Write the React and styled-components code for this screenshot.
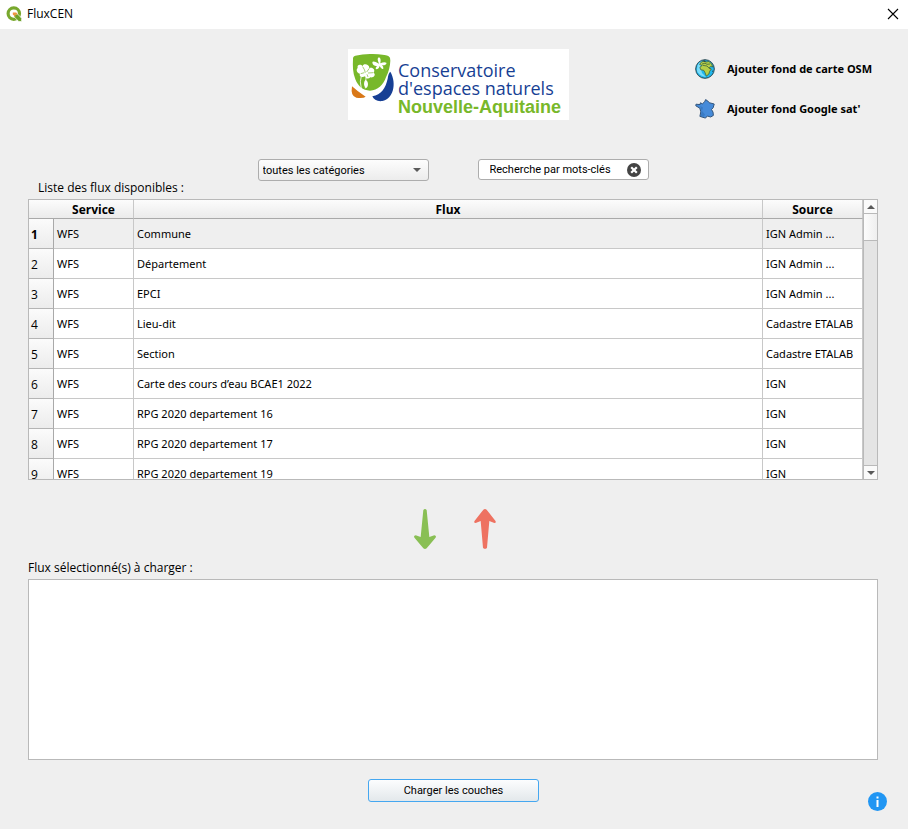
import React, { useState } from 'react';
import styled, { createGlobalStyle } from 'styled-components';

const GlobalStyle = createGlobalStyle`
  *, *::before, *::after { box-sizing: border-box; }
  body {
    margin: 0;
    background: #efefef;
    color: #000;
    font: 12px/16px "Open Sans", "Noto Sans", sans-serif;
  }
  button, input, select { font: inherit; color: inherit; }
  svg { flex: none; }
`;

const Dialog = styled.div`
  display: flex;
  flex-direction: column;
  min-height: 100vh;
`;

const TitleBar = styled.header`
  display: flex;
  align-items: center;
  height: 29px;
  padding: 0 8px 2px 6px;
  gap: 5px;
  background: #fff;
`;

const WindowTitle = styled.h1`
  flex: 1;
  margin: 0;
  font-size: 12px;
  font-weight: 400;
`;

const IconButton = styled.button`
  display: flex;
  padding: 0;
  border: 0;
  background: none;
  cursor: pointer;
`;

const Content = styled.main`
  display: flex;
  flex: 1;
  flex-direction: column;
  padding: 20px 30px 19px 28px;
`;

const Hero = styled.section`
  display: grid;
  grid-template-columns: 1fr 221px 1fr;
  padding-left: 11px;
`;

const Logo = styled.div`
  grid-column: 2;
  display: flex;
  height: 71px;
  background: #fff;
`;

const LogoText = styled.div`
  display: flex;
  flex-direction: column;
  padding-top: 12px;
  color: #173f94;
  font: 18px/18px "Open Sans", sans-serif;
  white-space: nowrap;
`;

const Region = styled.strong`
  color: #78b82a;
  font: bold 18px/20px "Liberation Sans", sans-serif;
`;

const MapActions = styled.div`
  display: flex;
  flex-direction: column;
  justify-self: end;
  width: 183px;
  gap: 20px;
  padding-top: 10px;
`;

const MapAction = styled.button`
  display: flex;
  align-items: center;
  height: 20px;
  gap: 12px;
  padding: 0;
  border: 0;
  background: none;
  font-family: "Noto Sans", sans-serif;
  font-size: 11px;
  font-weight: 700;
  white-space: nowrap;
  cursor: pointer;
`;

const Filters = styled.div`
  display: flex;
  justify-content: center;
  gap: 49px;
  margin-top: 39px;
`;

const controlFont = '11px/16px Roboto, sans-serif';

const field = `
  width: 171px;
  height: 22px;
  border: 1px solid #adadad;
  border-radius: 3px;
  font: ${controlFont};
`;

const SelectBox = styled.div`
  ${field}
  display: grid;
  grid-template-columns: 1fr 15px;
  align-items: center;
  background: linear-gradient(#fdfdfd, #ececec);
`;

const CategorySelect = styled.select`
  grid-area: 1 / 1 / 2 / 3;
  width: 100%;
  height: 20px;
  padding: 2px 16px 0 4px;
  border: 0;
  background: none;
  appearance: none;
`;

const SelectArrow = styled.svg`
  grid-area: 1 / 2;
  pointer-events: none;
`;

const SearchBox = styled.div`
  ${field}
  display: flex;
  align-items: center;
  height: 21px;
  padding: 0 7px 0 11px;
  background: #fff;
`;

const SearchInput = styled.input`
  flex: 1;
  min-width: 0;
  padding: 0;
  border: 0;
  outline: 0;
  background: none;
  &::placeholder { color: #000; opacity: 1; }
`;

const Caption = styled.h2`
  margin: 0 0 4px;
  padding-left: ${(p) => (p.$indent ? '10px' : '0')};
  font-size: 12px;
  font-weight: 400;
  line-height: 14px;
`;

const TableFrame = styled.div`
  display: flex;
  height: 281px;
  border: 1px solid #b9b9b9;
  background: #fff;
  overflow: hidden;
`;

const TableViewport = styled.div`
  flex: 1;
  min-width: 0;
  overflow: hidden;
`;

const FluxTable = styled.table`
  width: 100%;
  table-layout: fixed;
  border-collapse: separate;
  border-spacing: 0;
`;

const Col = styled.col`
  width: ${(p) => p.$width};
`;

const HeadCell = styled.th`
  height: 19px;
  padding: 2px 0 0;
  border-right: ${(p) => (p.$corner ? '0' : '1px solid #c8c8c8')};
  border-bottom: 1px solid #a9a9a9;
  background: linear-gradient(#fcfcfc, #ebebeb);
  line-height: 16px;
`;

const RowNumber = styled.th`
  height: 30px;
  padding: 2px 0 0 2px;
  border-right: 1px solid #a9a9a9;
  border-bottom: 1px solid #b4b4b4;
  background: linear-gradient(#fbfbfb, #ececec);
  font-weight: ${(p) => (p.$current ? 700 : 400)};
  text-align: left;
`;

const Cell = styled.td`
  height: 30px;
  padding: 0 3px;
  border-right: 1px solid #c8c8c8;
  border-bottom: 1px solid #c8c8c8;
  background: ${(p) => (p.$current ? '#efefef' : '#fff')};
  font-family: "Noto Sans", sans-serif;
  font-size: 11px;
  overflow: hidden;
  white-space: nowrap;
`;

const ScrollTrack = styled.div`
  display: flex;
  flex-direction: column;
  width: 14px;
  border-left: 1px solid #b9b9b9;
  background: #e4e4e4;
`;

const ScrollStep = styled.button`
  display: flex;
  align-items: center;
  justify-content: center;
  height: 14px;
  padding: 0;
  border: 0 solid #b9b9b9;
  border-width: ${(p) => (p.$down ? '1px 0 0' : '0 0 1px')};
  background: #fafafa;
`;

const ScrollThumb = styled.div`
  height: 27px;
  margin-bottom: auto;
  border-bottom: 1px solid #b9b9b9;
  background: linear-gradient(90deg, #fcfcfc, #efefef);
`;

const Transfer = styled.div`
  display: flex;
  justify-content: center;
  gap: 38px;
  padding: 29px 0 12px 4px;
`;

const Selected = styled.ul`
  flex: 1;
  min-height: 120px;
  margin: 0;
  padding: 0;
  border: 1px solid #b9b9b9;
  background: #fff;
  list-style: none;
`;

const Footer = styled.footer`
  display: grid;
  grid-template-columns: 1fr 171px 1fr;
  padding: 0 21px 18px 20px;
`;

const LoadButton = styled.button`
  grid-column: 2;
  height: 23px;
  padding: 0;
  border: 1px solid #45a7f0;
  border-radius: 3px;
  background: linear-gradient(#fcfdfe, #e3e8eb);
  font: ${controlFont};
  cursor: pointer;
`;

const InfoButton = styled(IconButton)`
  justify-self: end;
  margin-top: 13px;
`;

const rows = [
  ['WFS', 'Commune', 'IGN Admin ...'],
  ['WFS', 'Département', 'IGN Admin ...'],
  ['WFS', 'EPCI', 'IGN Admin ...'],
  ['WFS', 'Lieu-dit', 'Cadastre ETALAB'],
  ['WFS', 'Section', 'Cadastre ETALAB'],
  ['WFS', 'Carte des cours d’eau BCAE1 2022', 'IGN'],
  ['WFS', 'RPG 2020 departement 16', 'IGN'],
  ['WFS', 'RPG 2020 departement 17', 'IGN'],
  ['WFS', 'RPG 2020 departement 19', 'IGN'],
];

const QgisIcon = () => (
  <svg width="16" height="16" viewBox="0 0 16 16" aria-hidden="true">
    <circle cx="7.8" cy="7.6" r="5.7" fill="none" stroke="#78a82d" strokeWidth="3.2" />
    <path d="M8 8h3.6l4 4.2v3.3h-2.8L8 10.8z" fill="#6ea22a" stroke="#fff" strokeWidth=".7" />
    <path d="M6.8 6.5h3.4L12 8.4H9.4v2.5L6.8 8.5z" fill="#ef9440" />
  </svg>
);

const LogoMark = () => (
  <svg width="50" height="71" viewBox="24 27 150 213" aria-hidden="true">
    <path d="M39 58Q38 49 46 47Q70 41 98 42Q134 43 145 48Q152 52 151 62Q150 88 138 112C130 135 113 151 90 152C68 152 54 138 46 118C38 98 38 78 39 58Z" fill="#78b82a" />
    <path d="M36 139Q52 154 77 170Q70 176 49 173Q31 169 36 139Z" fill="#d97818" />
    <path d="M151 95C172 132 158 178 127 183C112 185 101 179 97 169C124 164 137 144 143 116Q145 100 151 95Z" fill="#173f94" />
    <path d="M53 84C50 74 62 71 68 79C69 69 88 72 88 84C98 80 107 89 101 98C109 104 101 114 91 112C86 118 77 117 75 109C67 114 56 109 60 101C51 100 47 89 53 84Z" fill="#fff" />
    <path d="M68 80Q75 90 76 98M88 85L80 96M100 98L84 99M62 101L73 98M81 103L84 111" fill="none" stroke="#78b82a" strokeWidth="2" />
    <path d="M64 108Q58 124 64 146M78 112L76 145" fill="none" stroke="#fff" strokeWidth="2.5" />
    <path d="M76 120C86 122 86 139 79 144C71 141 70 127 76 120Z" fill="#fff" />
    <path d="M117 71Q100 61 97 66Q97 77 111 79Q104 85 109 88Q116 88 119 78Q125 90 130 86Q131 80 126 76Q142 75 139 68Q133 64 121 70Q124 54 117 52Q109 54 117 71Z" fill="#fff" />
  </svg>
);

const GlobeIcon = () => (
  <svg width="20" height="20" viewBox="0 0 20 20" aria-hidden="true">
    <circle cx="10" cy="10" r="9.3" fill="#20b7ed" stroke="#26464f" />
    <path d="M2.2 8Q3 3.5 7 2.2L5.5 8 7 14 11 18Q4 17 2 12Z" fill="#79dcfa" />
    <path d="M6 3.2L9 2.1 11 3 14 2.5 16.6 5.1 17.7 8 15.8 7.4 14.2 8.6 16.3 10 14.6 12.4 13.9 15 11.3 17.1 10.1 13.8 8.8 11.4 5.7 10.7 4.9 8.3 7.3 6.3 4.7 5.7Z" fill="#b6cf48" stroke="#416638" strokeWidth=".8" />
    <path d="M7 5L10 4.2 12 5.3 15 5M8 6.4L12 7 15 10.1" fill="none" stroke="#416638" strokeWidth=".8" />
    <path d="M8 1.5h2l1 1-2 .5zM17 12.5l.8-1.5v2.4z" fill="#293f42" />
  </svg>
);

const FranceIcon = () => (
  <svg width="20" height="20" viewBox="0 0 20 20" aria-hidden="true">
    <path d="M10.6 .6L12.8 2 14.2 3.7 19.2 5 18.2 8.7 16.5 10.5 18 13.1 18.4 16.4 15.7 18 12.3 17 10.5 19.1 4.9 17.4 5.8 12.8 4.8 9.2 .8 6.8 1 5.2 5.1 5.6 5.4 3.8 7.4 4.8 9.7 2.7Z" fill="#468bd9" stroke="#34557a" strokeWidth="1" strokeLinejoin="round" />
    <path d="M5.1 7L8 8.5 7 12 10 15.5 8.7 17.7 5.7 16.8 6.8 12Z" fill="#397bc4" />
  </svg>
);

const ArrowIcon = ({ up }) => (
  <svg width="22" height="40" viewBox="0 0 66 120" aria-hidden="true">
    <path
      d={up
        ? 'M28 2Q33-2 38 2L64 35Q68 42 61 42L46 36 39 116Q33 123 27 116L20 36 5 42Q-2 42 2 35Z'
        : 'M28 3Q33-3 38 3L46 84 61 79Q69 80 64 87L38 118Q33 122 28 118L2 87Q-3 80 5 79L20 84Z'}
      fill={up ? '#ee7261' : '#89bf54'}
    />
  </svg>
);

const StepArrow = ({ down }) => (
  <svg width="8" height="4" viewBox="0 0 8 4" aria-hidden="true">
    <path d={down ? 'M0 0h8L4 4z' : 'M0 4h8L4 0z'} fill="#5a5a5a" />
  </svg>
);

export default function App() {
  const [search, setSearch] = useState('');
  return (
    <>
      <GlobalStyle />
      <Dialog>
        <TitleBar>
          <QgisIcon />
          <WindowTitle>FluxCEN</WindowTitle>
          <IconButton type="button" aria-label="Fermer">
            <svg width="14" height="14" viewBox="0 0 14 14">
              <path d="M2 2l10 10M12 2L2 12" stroke="#000" strokeWidth="1.1" />
            </svg>
          </IconButton>
        </TitleBar>
        <Content>
          <Hero>
            <Logo>
              <LogoMark />
              <LogoText>
                <span>Conservatoire</span>
                <span>d'espaces naturels</span>
                <Region>Nouvelle-Aquitaine</Region>
              </LogoText>
            </Logo>
            <MapActions>
              <MapAction type="button"><GlobeIcon />Ajouter fond de carte OSM</MapAction>
              <MapAction type="button"><FranceIcon />Ajouter fond Google sat'</MapAction>
            </MapActions>
          </Hero>
          <Filters>
            <SelectBox>
              <CategorySelect aria-label="Catégorie">
                <option>toutes les catégories</option>
              </CategorySelect>
              <SelectArrow width="8" height="4" viewBox="0 0 8 4" aria-hidden="true">
                <path d="M0 0h8L4 4z" fill="#5a5a5a" />
              </SelectArrow>
            </SelectBox>
            <SearchBox>
              <SearchInput
                aria-label="Recherche par mots-clés"
                placeholder="Recherche par mots-clés"
                value={search}
                onChange={(e) => setSearch(e.target.value)}
              />
              <IconButton type="button" aria-label="Effacer" onClick={() => setSearch('')}>
                <svg width="14" height="14" viewBox="0 0 14 14">
                  <circle cx="7" cy="7" r="7" fill="#444" />
                  <path d="M4.2 4.2l5.6 5.6M9.8 4.2L4.2 9.8" stroke="#fff" strokeWidth="2.2" />
                </svg>
              </IconButton>
            </SearchBox>
          </Filters>
          <Caption $indent>Liste des flux disponibles :</Caption>
          <TableFrame>
            <TableViewport>
              <FluxTable>
                <colgroup>
                  <Col $width="25px" />
                  <Col $width="80px" />
                  <Col $width="auto" />
                  <Col $width="100px" />
                </colgroup>
                <thead>
                  <tr>
                    <HeadCell $corner />
                    <HeadCell scope="col">Service</HeadCell>
                    <HeadCell scope="col">Flux</HeadCell>
                    <HeadCell scope="col">Source</HeadCell>
                  </tr>
                </thead>
                <tbody>
                  {rows.map((row, i) => (
                    <tr key={row[1]}>
                      <RowNumber scope="row" $current={i === 0}>{i + 1}</RowNumber>
                      {row.map((text, j) => <Cell key={j} $current={i === 0}>{text}</Cell>)}
                    </tr>
                  ))}
                </tbody>
              </FluxTable>
            </TableViewport>
            <ScrollTrack>
              <ScrollStep type="button" aria-label="Défiler vers le haut"><StepArrow /></ScrollStep>
              <ScrollThumb />
              <ScrollStep type="button" $down aria-label="Défiler vers le bas"><StepArrow down /></ScrollStep>
            </ScrollTrack>
          </TableFrame>
          <Transfer>
            <IconButton type="button" aria-label="Ajouter à la sélection"><ArrowIcon /></IconButton>
            <IconButton type="button" aria-label="Retirer de la sélection"><ArrowIcon up /></IconButton>
          </Transfer>
          <Caption id="selected-label">Flux sélectionné(s) à charger :</Caption>
          <Selected aria-labelledby="selected-label" />
        </Content>
        <Footer>
          <LoadButton type="button">Charger les couches</LoadButton>
          <InfoButton type="button" aria-label="Informations">
            <svg width="19" height="19" viewBox="0 0 19 19">
              <circle cx="9.5" cy="9.5" r="9.5" fill="#2196f3" />
              <path d="M8.5 4.5h2v2h-2zM8.5 8h2v7h-2z" fill="#fff" />
            </svg>
          </InfoButton>
        </Footer>
      </Dialog>
    </>
  );
}
